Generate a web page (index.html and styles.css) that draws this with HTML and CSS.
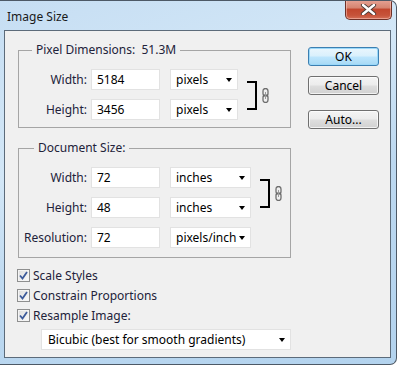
FILE: index.html
```html
<!DOCTYPE html>
<html>
<head>
<meta charset="utf-8">
<link rel="stylesheet" href="styles.css">
</head>
<body>
<div class="window">
  <div class="titlebar">
    <span class="title">Image Size</span>
    <div class="close">
      <svg width="17" height="11" viewBox="0 0 17 11">
        <path d="M3 1 L14 10 M14 1 L3 10" stroke="#4a3a36" stroke-width="4.2" fill="none" stroke-linecap="round"/>
        <path d="M3 1 L14 10 M14 1 L3 10" stroke="#ffffff" stroke-width="2.4" fill="none" stroke-linecap="round"/>
      </svg>
    </div>
  </div>
  <div class="client">
    <div class="left">
      <fieldset class="group">
        <legend>Pixel Dimensions:&nbsp; 51.3M</legend>
        <div class="grid g1">
          <span class="lbl">Width:</span>
          <div class="field">5184</div>
          <div class="select">pixels<span class="arrow"></span></div>
          <div class="link">
            <div class="bracket"></div>
            <svg class="chain" width="7" height="15" viewBox="0 0 7 15">
              <rect x="1" y="0.5" width="5" height="7.5" rx="2.5" fill="none" stroke="#6e6e6e" stroke-width="1.3"/>
              <rect x="1" y="7" width="5" height="7.5" rx="2.5" fill="none" stroke="#6e6e6e" stroke-width="1.3"/>
              <line x1="3.5" y1="4" x2="3.5" y2="11" stroke="#9a9a9a" stroke-width="1"/>
            </svg>
          </div>
          <span class="lbl">Height:</span>
          <div class="field">3456</div>
          <div class="select">pixels<span class="arrow"></span></div>
        </div>
      </fieldset>
      <fieldset class="group g2box">
        <legend>Document Size:</legend>
        <div class="grid g2">
          <span class="lbl">Width:</span>
          <div class="field">72</div>
          <div class="select">inches<span class="arrow"></span></div>
          <div class="link">
            <div class="bracket"></div>
            <svg class="chain" width="7" height="15" viewBox="0 0 7 15">
              <rect x="1" y="0.5" width="5" height="7.5" rx="2.5" fill="none" stroke="#6e6e6e" stroke-width="1.3"/>
              <rect x="1" y="7" width="5" height="7.5" rx="2.5" fill="none" stroke="#6e6e6e" stroke-width="1.3"/>
              <line x1="3.5" y1="4" x2="3.5" y2="11" stroke="#9a9a9a" stroke-width="1"/>
            </svg>
          </div>
          <span class="lbl">Height:</span>
          <div class="field">48</div>
          <div class="select">inches<span class="arrow"></span></div>
          <span class="lbl">Resolution:</span>
          <div class="field">72</div>
          <div class="select">pixels/inch<span class="arrow"></span></div>
        </div>
      </fieldset>
      <div class="checks">
        <div class="check"><span class="box"><svg width="9" height="9" viewBox="0 0 9 9"><path d="M1 4.5 L3.5 7.5 L8 1" stroke="#3c5a9a" stroke-width="1.8" fill="none"/></svg></span>Scale Styles</div>
        <div class="check"><span class="box"><svg width="9" height="9" viewBox="0 0 9 9"><path d="M1 4.5 L3.5 7.5 L8 1" stroke="#3c5a9a" stroke-width="1.8" fill="none"/></svg></span>Constrain Proportions</div>
        <div class="check"><span class="box"><svg width="9" height="9" viewBox="0 0 9 9"><path d="M1 4.5 L3.5 7.5 L8 1" stroke="#3c5a9a" stroke-width="1.8" fill="none"/></svg></span>Resample Image:</div>
      </div>
      <div class="select wide">Bicubic (best for smooth gradients)<span class="arrow"></span></div>
    </div>
    <div class="buttons">
      <div class="btn default">OK</div>
      <div class="btn">Cancel</div>
      <div class="btn auto">Auto...</div>
    </div>
  </div>
</div>
</body>
</html>
```

FILE: styles.css
```css
* { box-sizing: border-box; }
html, body { margin: 0; padding: 0; background: #ffffff; }
body {
  font-family: "Noto Sans", "Open Sans", sans-serif;
  font-size: 12px;
  color: #22223a;
}
.window {
  width: 397px;
  height: 365px;
  border: 1px solid #4d5966;
  border-left: none;
  border-radius: 0 7px 7px 0;
  background: linear-gradient(160deg, #c6def3 0%, #d3e7f7 35%, #bcd8f0 60%, #b3d3ee 100%);
  display: flex;
  flex-direction: column;
  overflow: hidden;
}
.titlebar {
  height: 29px;
  display: flex;
  justify-content: space-between;
  align-items: flex-start;
  padding: 0 4px 0 7px;
}
.title {
  font-size: 12px;
  line-height: 14px;
  margin-top: 9px;
  color: #1a1a1a;
}
.close {
  width: 47px;
  height: 20px;
  margin-top: -1px;
  border: 1px solid #6e3128;
  border-top: none;
  border-radius: 0 0 5px 5px;
  background: linear-gradient(to bottom, #e6a395 0%, #d68571 40%, #c2472e 50%, #c6533a 80%, #d46f57 100%);
  box-shadow: inset 0 0 0 1px rgba(255,210,200,0.5);
  display: flex;
  align-items: center;
  justify-content: center;
}
.client {
  margin: 0 5px 0 4px;
  height: 328px;
  border: 1px solid #5c6b7a;
  background: #f0f0f0;
  display: flex;
  padding: 12px 0 0 13px;
}
.left {
  width: 273px;
  display: flex;
  flex-direction: column;
}
.group {
  margin: 0;
  padding: 12px 0 7px 0;
  border: 1px solid #a5a5a5;
  min-width: 0;
}
.g2box {
  margin-top: 13px;
  padding-top: 12px;
  padding-bottom: 9px;
}
legend {
  margin-left: 13px;
  padding: 0 4px;
  line-height: 14px;
  font-size: 12px;
  color: #22223a;
}
.g2box legend { margin-left: 15px; }
.grid {
  display: grid;
  grid-template-columns: 72px 79px 77px auto;
  grid-auto-rows: 21px;
  row-gap: 9px;
  align-items: center;
}
.g2 { grid-template-columns: 72px 79px 90px auto; }
.lbl {
  text-align: right;
  padding-right: 4px;
  line-height: 21px;
}
.field {
  width: 69px;
  height: 21px;
  background: #ffffff;
  border: 1px solid #e2e2e2;
  padding-left: 5px;
  line-height: 19px;
  color: #000000;
}
.select {
  position: relative;
  width: 68px;
  height: 21px;
  background: #ffffff;
  border: 1px solid #e2e2e2;
  padding-left: 5px;
  line-height: 19px;
  color: #000000;
}
.g2 .select { width: 81px; }
.arrow {
  position: absolute;
  right: 5px;
  top: 8px;
  width: 0;
  height: 0;
  border-left: 3.5px solid transparent;
  border-right: 3.5px solid transparent;
  border-top: 4px solid #000000;
}
.link {
  grid-column: 4;
  grid-row: 1 / 3;
  align-self: stretch;
  display: flex;
  align-items: center;
}
.bracket {
  width: 10px;
  align-self: stretch;
  margin: 12px 0 10px 0;
  border: 2px solid #000000;
  border-left: none;
}
.chain { margin-left: 5px; margin-top: 1px; }
.checks {
  margin-top: 7px;
  display: flex;
  flex-direction: column;
  margin-left: -1px;
}
.check {
  height: 20px;
  display: flex;
  align-items: center;
  gap: 3px;
}
.box {
  width: 13px;
  height: 13px;
  border: 1px solid #8e8f8f;
  background: linear-gradient(135deg, #dcdcdc, #fbfbfb);
  box-shadow: inset 0 0 0 1px #f4f4f4;
  display: flex;
  align-items: center;
  justify-content: center;
}
.select.wide {
  margin: 4px 0 0 23px;
  width: 250px;
  padding-left: 6px;
}
.buttons {
  margin-left: 17px;
  padding-top: 4px;
  display: flex;
  flex-direction: column;
}
.btn {
  width: 71px;
  height: 19px;
  border: 1px solid #707070;
  border-radius: 3px;
  background: linear-gradient(to bottom, #f4f4f4 0%, #ececec 48%, #dedede 52%, #d1d1d1 100%);
  box-shadow: inset 0 0 0 1px rgba(255,255,255,0.7);
  text-align: center;
  line-height: 17px;
  color: #000000;
  margin-bottom: 10px;
}
.btn.default {
  border-color: #3c7fb1;
  background: linear-gradient(to bottom, #eaf6fd 0%, #d9f0fc 48%, #bee6fd 52%, #a7d9f5 100%);
  box-shadow: inset 0 0 0 1px #9ad8f9;
}
.btn.auto { margin-top: 5px; }
```
